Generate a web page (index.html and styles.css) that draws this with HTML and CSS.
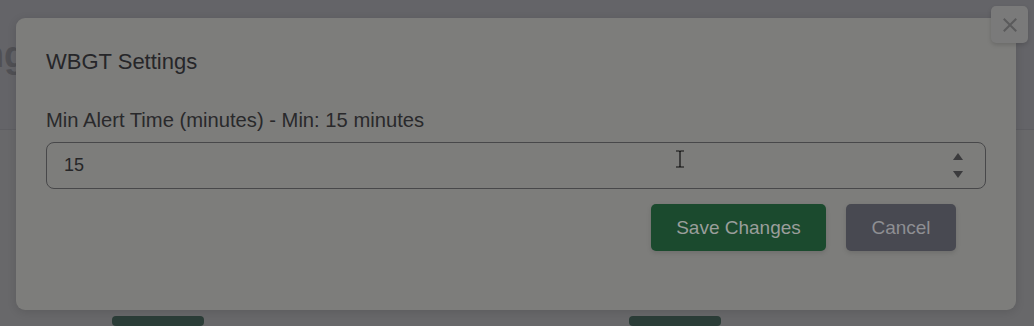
FILE: index.html
```html
<!DOCTYPE html>
<html lang="en">
<head>
<meta charset="utf-8">
<title>WBGT Settings</title>
<link rel="stylesheet" href="styles.css">
</head>
<body>
<div class="page">
  <div class="page-head"><h1 class="page-title">Monitoring</h1></div>
  <div class="page-cards">
    <div class="card"><span class="card-btn"></span></div>
    <div class="card"><span class="card-btn"></span></div>
  </div>
</div>

<div class="modal">
  <h2 class="modal-title">WBGT Settings</h2>
  <label class="field-label" for="minAlert">Min Alert Time (minutes) - Min: 15 minutes</label>
  <div class="input-wrap">
    <span class="input-value">15</span>
    <span class="spinner">
      <svg width="12" height="28" viewBox="0 0 12 28"><path d="M6 1 L11 8 L1 8 Z" fill="#3b3b3d"/><path d="M1 19 L11 19 L6 26 Z" fill="#3b3b3d"/></svg>
    </span>
  </div>
  <div class="actions">
    <button class="btn btn-save">Save Changes</button>
    <button class="btn btn-cancel">Cancel</button>
  </div>
</div>

<button class="close-btn" aria-label="Close">
  <svg width="14" height="14" viewBox="0 0 14 14"><path d="M1.5 1.5 L12.5 12.5 M12.5 1.5 L1.5 12.5" stroke="#5a5a5b" stroke-width="2" stroke-linecap="square"/></svg>
</button>

<svg class="cursor" width="10" height="18" viewBox="0 0 10 18"><path d="M1 1 H4 M6 1 H9 M5 1.5 V16.5 M1 17 H4 M6 17 H9 M4 1 Q5 1 5 2 Q5 1 6 1 M4 17 Q5 17 5 16 Q5 17 6 17" stroke="#111" stroke-width="1.2" fill="none"/></svg>
</body>
</html>
```
FILE: styles.css
```css
* { box-sizing: border-box; }
html, body {
  margin: 0;
  padding: 0;
  width: 1034px;
  height: 326px;
  overflow: hidden;
}
body {
  background: #646468;
  font-family: "Liberation Sans", Arial, sans-serif;
  position: relative;
}
.page {
  display: flex;
  flex-direction: column;
  height: 100%;
}
.page-head {
  height: 136px;
  border-bottom: 1px solid #5e5e62;
  padding: 34px 0 0 0;
  overflow: hidden;
}
.page-title {
  margin: 0 0 0 -160px;
  font-size: 36px;
  font-weight: bold;
  color: #505054;
}
.page-cards {
  flex: 1;
  display: flex;
  gap: 20px;
  padding: 0 10px;
  background: #68686a;
}
.card {
  flex: 1;
  position: relative;
}
.card-btn {
  display: block;
  width: 92px;
  height: 10px;
  margin: 186px 0 0 102px;
  border-radius: 4px;
  background: #2b3d38;
}
.modal {
  position: absolute;
  left: 16px;
  top: 18px;
  width: 1000px;
  height: 292px;
  background: #7d7d7b;
  border-radius: 9px;
  padding: 31px 30px 0 30px;
  display: flex;
  flex-direction: column;
  box-shadow: 0 2px 10px rgba(0,0,0,0.12);
}
.modal-title {
  margin: 0;
  font-size: 22px;
  font-weight: normal;
  color: #262629;
  line-height: 26px;
}
.field-label {
  margin-top: 33px;
  font-size: 20.2px;
  color: #29292b;
  line-height: 24px;
}
.input-wrap {
  margin-top: 10px;
  height: 47px;
  border: 1px solid #48484a;
  border-radius: 8px;
  display: flex;
  align-items: center;
  justify-content: space-between;
  padding: 0 21px 0 17px;
}
.input-value {
  font-size: 18px;
  color: #262628;
}
.spinner {
  display: flex;
  align-items: center;
}
.spinner svg { display: block; }
.actions {
  display: flex;
  justify-content: flex-end;
  gap: 20px;
  margin-top: 15px;
  padding-right: 30px;
}
.btn {
  font-family: "Liberation Sans", Arial, sans-serif;
  font-size: 19px;
  height: 47px;
  border: none;
  border-radius: 5px;
  padding: 0;
  cursor: pointer;
  box-shadow: 0 2px 5px rgba(0,0,0,0.12);
}
.btn-save {
  background: #1b4a2e;
  color: #9a9e9b;
  width: 175px;
}
.btn-cancel {
  background: #484951;
  color: #8e8f93;
  width: 110px;
}
.close-btn {
  position: absolute;
  left: 991px;
  top: 6px;
  width: 37px;
  height: 37px;
  border: none;
  border-radius: 5px;
  background: #7a7a7a;
  display: flex;
  align-items: center;
  justify-content: center;
  padding: 0;
  box-shadow: 0 2px 4px rgba(0,0,0,0.15);
}
.cursor {
  position: absolute;
  left: 675px;
  top: 150px;
}
```
